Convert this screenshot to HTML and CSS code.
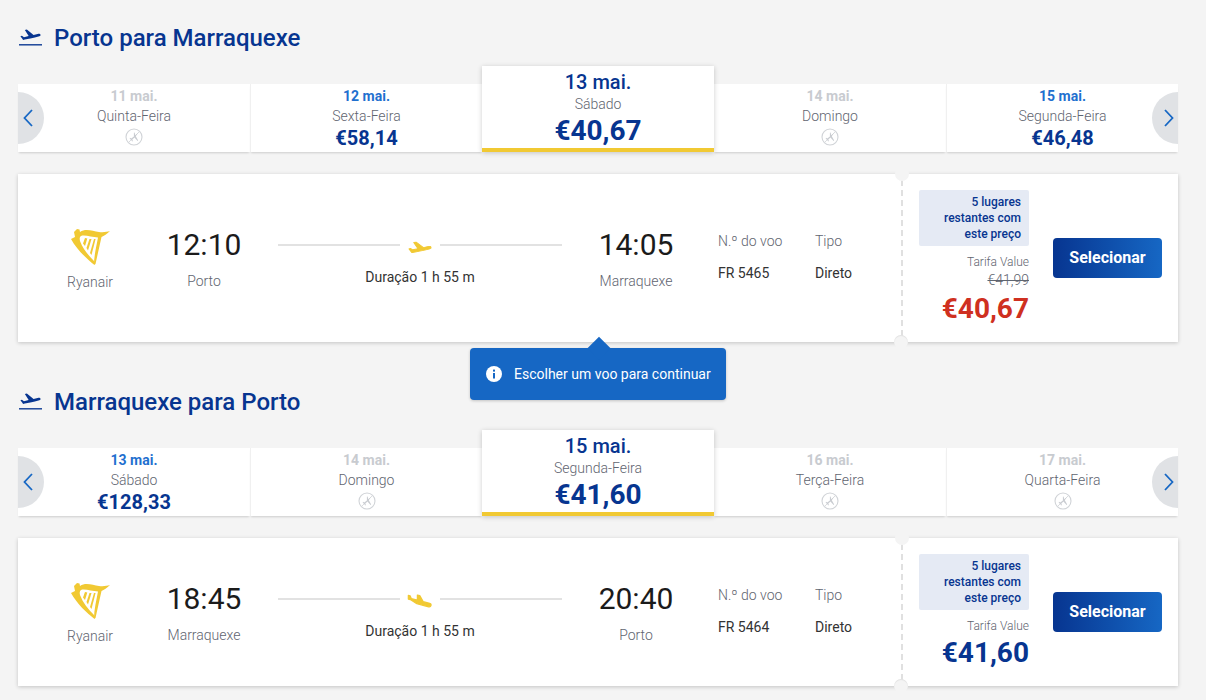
FILE: index.html
```html
<!DOCTYPE html>
<html lang="pt">
<head>
<meta charset="utf-8">
<title>Voos</title>
<link rel="stylesheet" href="styles.css">
</head>
<body>
<svg class="defs" width="0" height="0" aria-hidden="true">
  <defs>
    <path id="takeoff" d="M21.57 8.64c-.21-.8-1.04-1.28-1.84-1.06L14.92 9l-6.4-6.43-1.93.51 3.64 7.17-4.47 1.33-1.97-1.54-1.45.39 1.82 3.16.77 1.33 1.6-.43 5.31-1.42 4.35-1.16 4.3-1.36c.81-.23 1.28-1.05 1.07-1.85z"/>
    <path id="landing" d="M9.68 13.27l4.35 1.16 5.31 1.42c.8.21 1.62-.26 1.84-1.06.21-.8-.26-1.62-1.06-1.84l-5.31-1.42-2.76-5.02L10.12 6v4.28L5.15 8.95l-.93-2.32-1.45-.39v3.17l1.6.43 5.31 3.43z"/>
    <g id="harp">
      <path d="M4 4 L7 1 L9.500 1.500 L10 4 C16 0 23 3.500 29 4 C33 4.500 37 4 40 3 C37 6 34 8 31.500 9 L25.500 36 L24 37 C24 27 26.500 18 28 9.500 C22 9.500 15 6.500 11 8 C9.500 9 9.500 11 10 13 C13 21 18 27 24 33 L24.500 37 C17 31 7 22 1 11 L5 9 Z"/>
      <path d="M15 10 L17.300 10.500 L15 18 L13 15.500 Z"/>
      <path d="M19.500 11 L21.500 11 L18 22.500 L16.500 20 Z"/>
      <path d="M24 11 L25.600 11 L21.500 27 L20 25 Z"/>
    </g>
    <g id="noflight">
      <circle cx="9" cy="9" r="8" fill="none" stroke="#d0d3d7" stroke-width="1.100"/>
      <path d="M4 14 L14 4" stroke="#d0d3d7" stroke-width=".8"/>
      <path d="M13 5 L10.300 7.300 L9.600 4.500 L8.900 4.800 L8.900 8.600 L6.300 10.600 L5 9.800 L4.600 10.200 L6 12 L7.600 13.400 L8 13 L7.200 11.800 L9.400 9.600 L12.600 13 L13.200 12.500 L10.800 8.200 Z" fill="#c9ccd1"/>
    </g>
  </defs>
</svg>

<main class="page">
  <section class="leg">
    <h2 class="leg-title">
      <svg class="leg-icon" viewBox="1 2 22 20" preserveAspectRatio="none"><use href="#takeoff"/><rect x="1" y="19.800" width="22" height="1.600"/></svg>
      Porto para Marraquexe
    </h2>
    <div class="dates">
      <div class="date-cell">
        <div class="date off">11 mai.</div>
        <div class="weekday">Quinta-Feira</div>
        <svg class="no-flight" viewBox="0 0 18 18"><use href="#noflight"/></svg>
      </div>
      <div class="date-cell">
        <div class="date">12 mai.</div>
        <div class="weekday">Sexta-Feira</div>
        <div class="fare">€58,14</div>
      </div>
      <div class="date-cell selected">
        <div class="date">13 mai.</div>
        <div class="weekday">Sábado</div>
        <div class="fare">€40,67</div>
      </div>
      <div class="date-cell">
        <div class="date off">14 mai.</div>
        <div class="weekday">Domingo</div>
        <svg class="no-flight" viewBox="0 0 18 18"><use href="#noflight"/></svg>
      </div>
      <div class="date-cell">
        <div class="date">15 mai.</div>
        <div class="weekday">Segunda-Feira</div>
        <div class="fare">€46,48</div>
      </div>
      <div class="nav prev"><svg viewBox="0 0 10 18"><path d="M9 1 L1.500 9 L9 17"/></svg></div>
      <div class="nav next"><svg viewBox="0 0 10 18"><path d="M1 1 L8.500 9 L1 17"/></svg></div>
    </div>
    <div class="flight">
      <div class="flight-main">
        <div class="carrier">
          <svg class="harp" viewBox="0 0 40 38"><use href="#harp"/></svg>
          <div class="place">Ryanair</div>
        </div>
        <div class="stop">
          <div class="time">12:10</div>
          <div class="place">Porto</div>
        </div>
        <div class="route">
          <div class="route-line">
            <span class="rule"></span>
            <svg class="route-plane" viewBox="1.500 2.500 21 14" preserveAspectRatio="none"><use href="#takeoff"/></svg>
            <span class="rule"></span>
          </div>
          <div class="duration">Duração 1 h 55 m</div>
        </div>
        <div class="stop">
          <div class="time">14:05</div>
          <div class="place">Marraquexe</div>
        </div>
        <div class="info">
          <div class="info-col">
            <div class="info-label">N.º do voo</div>
            <div class="info-value">FR 5465</div>
          </div>
          <div class="info-col">
            <div class="info-label">Tipo</div>
            <div class="info-value">Direto</div>
          </div>
        </div>
      </div>
      <div class="flight-side">
        <div class="pricing">
          <div class="seats">5 lugares restantes com este preço</div>
          <div class="fare-type">Tarifa Value</div>
          <div class="old-price">€41,99</div>
          <div class="price sale">€40,67</div>
        </div>
        <button class="select">Selecionar</button>
      </div>
      <div class="tip">
        <svg class="tip-icon" viewBox="0 0 16 16"><circle cx="8" cy="8" r="8" fill="#fff"/><rect x="7" y="7" width="2" height="5.500" fill="#1667c4"/><rect x="7" y="3.600" width="2" height="2" fill="#1667c4"/></svg>
        Escolher um voo para continuar
      </div>
    </div>
  </section>

  <section class="leg">
    <h2 class="leg-title">
      <svg class="leg-icon" viewBox="1 2 22 20" preserveAspectRatio="none"><use href="#takeoff"/><rect x="1" y="19.800" width="22" height="1.600"/></svg>
      Marraquexe para Porto
    </h2>
    <div class="dates">
      <div class="date-cell">
        <div class="date">13 mai.</div>
        <div class="weekday">Sábado</div>
        <div class="fare">€128,33</div>
      </div>
      <div class="date-cell">
        <div class="date off">14 mai.</div>
        <div class="weekday">Domingo</div>
        <svg class="no-flight" viewBox="0 0 18 18"><use href="#noflight"/></svg>
      </div>
      <div class="date-cell selected">
        <div class="date">15 mai.</div>
        <div class="weekday">Segunda-Feira</div>
        <div class="fare">€41,60</div>
      </div>
      <div class="date-cell">
        <div class="date off">16 mai.</div>
        <div class="weekday">Terça-Feira</div>
        <svg class="no-flight" viewBox="0 0 18 18"><use href="#noflight"/></svg>
      </div>
      <div class="date-cell">
        <div class="date off">17 mai.</div>
        <div class="weekday">Quarta-Feira</div>
        <svg class="no-flight" viewBox="0 0 18 18"><use href="#noflight"/></svg>
      </div>
      <div class="nav prev"><svg viewBox="0 0 10 18"><path d="M9 1 L1.500 9 L9 17"/></svg></div>
      <div class="nav next"><svg viewBox="0 0 10 18"><path d="M1 1 L8.500 9 L1 17"/></svg></div>
    </div>
    <div class="flight">
      <div class="flight-main">
        <div class="carrier">
          <svg class="harp" viewBox="0 0 40 38"><use href="#harp"/></svg>
          <div class="place">Ryanair</div>
        </div>
        <div class="stop">
          <div class="time">18:45</div>
          <div class="place">Marraquexe</div>
        </div>
        <div class="route">
          <div class="route-line">
            <span class="rule"></span>
            <svg class="route-plane land" viewBox="2.500 6 19.500 10" preserveAspectRatio="none"><use href="#landing"/></svg>
            <span class="rule"></span>
          </div>
          <div class="duration">Duração 1 h 55 m</div>
        </div>
        <div class="stop">
          <div class="time">20:40</div>
          <div class="place">Porto</div>
        </div>
        <div class="info">
          <div class="info-col">
            <div class="info-label">N.º do voo</div>
            <div class="info-value">FR 5464</div>
          </div>
          <div class="info-col">
            <div class="info-label">Tipo</div>
            <div class="info-value">Direto</div>
          </div>
        </div>
      </div>
      <div class="flight-side">
        <div class="pricing">
          <div class="seats">5 lugares restantes com este preço</div>
          <div class="fare-type">Tarifa Value</div>
          <div class="price">€41,60</div>
        </div>
        <button class="select">Selecionar</button>
      </div>
    </div>
  </section>
</main>
</body>
</html>
```
FILE: styles.css
```css
* { box-sizing: border-box; }

html, body {
  margin: 0;
  background: #f4f4f4;
  font-family: Roboto, "Liberation Sans", sans-serif;
  color: #1d1d1f;
}

.defs { position: absolute; }

.page { padding: 0 28px 0 18px; }

.leg { padding: 22px 0; }

.leg + .leg { padding-bottom: 14px; }

.leg-title {
  display: flex;
  align-items: center;
  gap: 12px;
  height: 30px;
  margin: 0 0 14px;
  padding: 1px 0 0 1px;
  font-size: 24px;
  font-weight: 500;
  line-height: 30px;
  color: #073590;
}

.leg-icon { width: 23px; height: 17px; fill: #073590; flex: none; }

/* date carousel */
.dates {
  position: relative;
  display: flex;
  align-items: flex-end;
  height: 86px;
}

.date-cell {
  flex: 0 0 232px;
  height: 68px;
  padding-top: 2px;
  background: #fff;
  text-align: center;
  border-left: 1px solid #f0f0f0;
  box-shadow: 0 2px 2px -1px rgba(0, 0, 0, .16);
}

.date-cell:first-child { border-left: 0; }

.date {
  font-size: 14px;
  font-weight: 700;
  line-height: 20px;
  color: #1f70cf;
}

.date.off { color: #c8cbd0; }

.weekday {
  font-size: 14px;
  font-weight: 300;
  line-height: 20px;
  color: #5f6570;
}

.fare {
  font-size: 20px;
  font-weight: 700;
  line-height: 24px;
  color: #073590;
}

.no-flight { display: block; width: 18px; height: 18px; margin: 2px auto 0; }

.date-cell.selected {
  position: relative;
  z-index: 1;
  height: 86px;
  padding-top: 5px;
  border-left: 0;
  border-bottom: 4px solid #f1c933;
  box-shadow: 0 1px 5px rgba(0, 0, 0, .2);
}

.date-cell.selected + .date-cell { border-left: 0; }

.selected .date {
  font-size: 20px;
  font-weight: 500;
  line-height: 22px;
  color: #073590;
}

.selected .weekday { line-height: 22px; }

.selected .fare { font-size: 28px; font-weight: 700; line-height: 32px; }

.nav {
  position: absolute;
  z-index: 2;
  bottom: 8px;
  display: flex;
  align-items: center;
  width: 26px;
  height: 52px;
  background: #e0e2e5;
}

.nav svg { width: 10px; height: 18px; fill: none; stroke: #1667c4; stroke-width: 1.800; }

.nav.prev { left: 0; padding-left: 5px; border-radius: 0 26px 26px 0; }

.nav.next { right: 0; padding-left: 12px; border-radius: 26px 0 0 26px; }

/* flight card */
.flight {
  position: relative;
  display: flex;
  margin-top: 22px;
  background: #fff;
  box-shadow: 0 1px 4px rgba(0, 0, 0, .2);
}

.flight-main {
  display: flex;
  flex: 1;
  align-items: center;
  padding-left: 22px;
}

.carrier {
  flex: 0 0 100px;
  margin-right: 14px;
  padding-top: 2px;
  text-align: center;
}

.harp { display: block; width: 40px; height: 38px; margin: 0 auto 7px; fill: #f1c933; }

.carrier .place { line-height: 18px; }

.stop { flex: 0 0 100px; padding-top: 2px; text-align: center; }

.time {
  font-size: 30px;
  font-weight: 400;
  line-height: 36px;
  color: #1b1b1b;
}

.place {
  margin-top: 8px;
  font-size: 14px;
  font-weight: 300;
  line-height: 20px;
  color: #5f6570;
}

.carrier .place { margin-top: 0; }

.route { flex: 0 0 284px; margin: 0 24px; padding-top: 6px; text-align: center; }

.route-line { display: flex; align-items: center; gap: 8px; height: 20px; }

.rule { flex: 1; height: 2px; background: #e2e2e2; }

.route-plane {
  flex: none;
  width: 24px;
  height: 12px;
  margin-top: 5px;
  overflow: visible;
  fill: #f1c933;
  stroke: #f1c933;
  stroke-width: 1;
  stroke-linejoin: round;
}

.route-plane.land { margin-top: 4px; }

.duration {
  margin-top: 12px;
  font-size: 14px;
  line-height: 20px;
  color: #333;
}

.info {
  display: flex;
  margin: 0 0 2px 32px;
}

.info-col:first-child { flex: 0 0 97px; }

.info-col { min-width: 60px; }

.info-label {
  font-size: 14px;
  font-weight: 300;
  line-height: 20px;
  color: #5f6570;
}

.info-value {
  margin-top: 12px;
  font-size: 14px;
  line-height: 20px;
  color: #333;
}

.flight-side {
  position: relative;
  display: flex;
  flex: 0 0 277px;
  align-items: center;
  gap: 24px;
  padding: 16px 16px 17px 18px;
}

.flight-side::before {
  content: "";
  position: absolute;
  top: 6px;
  bottom: 6px;
  left: 0;
  border-left: 2px dashed #e0e0e0;
}

.flight-side::after {
  content: "";
  position: absolute;
  top: -7px;
  left: -6px;
  width: 14px;
  height: 14px;
  border-radius: 50%;
  background: #f4f4f4;
}

.flight::after {
  content: "";
  position: absolute;
  right: 270px;
  bottom: -7px;
  width: 14px;
  height: 14px;
  border-radius: 50%;
  background: #f4f4f4;
  box-shadow: inset 0 1px 1px rgba(0, 0, 0, .08);
}

.pricing {
  display: flex;
  flex: 0 0 110px;
  flex-direction: column;
  align-items: flex-end;
}

.seats {
  width: 110px;
  height: 56px;
  padding: 4px 8px;
  border-radius: 2px;
  background: #e5eaf4;
  font-size: 12px;
  font-weight: 500;
  line-height: 16px;
  text-align: right;
  color: #073590;
}

.fare-type {
  margin-top: 8px;
  font-size: 12px;
  font-weight: 300;
  line-height: 16px;
  color: #5f6570;
}

.old-price {
  margin: 2px 0 3px;
  font-size: 14px;
  font-weight: 300;
  line-height: 16px;
  color: #5f6570;
  text-decoration: line-through;
}

.price {
  margin-top: 3px;
  font-size: 28px;
  font-weight: 700;
  line-height: 32px;
  color: #073590;
}

.price.sale { color: #cf3020; margin-top: 2px; }

.select {
  flex: 0 0 109px;
  height: 40px;
  padding: 0;
  border: 0;
  border-radius: 4px;
  background: linear-gradient(90deg, #073590, #1667c4);
  font-family: inherit;
  font-size: 16px;
  font-weight: 700;
  color: #fff;
}

/* tooltip */
.tip {
  position: absolute;
  z-index: 3;
  top: calc(100% + 6px);
  left: 452px;
  display: flex;
  align-items: center;
  gap: 12px;
  width: 256px;
  height: 52px;
  padding-left: 16px;
  border-radius: 4px;
  background: #1667c4;
  box-shadow: 0 1px 3px rgba(0, 0, 0, .2);
  font-size: 14px;
  font-weight: 400;
  color: #fff;
}

.tip::before {
  content: "";
  position: absolute;
  top: -8px;
  left: 121px;
  width: 16px;
  height: 16px;
  background: #1667c4;
  transform: rotate(45deg);
}

.tip-icon { position: relative; width: 16px; height: 16px; flex: none; }
```
